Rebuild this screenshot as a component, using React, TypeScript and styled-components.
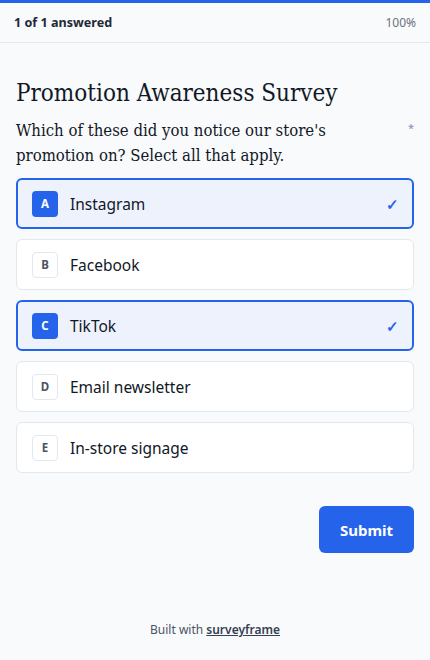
import React from "react";
import styled, { createGlobalStyle } from "styled-components";

const Global = createGlobalStyle`
  html, body { margin: 0; padding: 0; background: #f9fafb; }
  body { font-family: "Noto Sans", "Open Sans", sans-serif; color: #111827; }
  * { box-sizing: border-box; }
`;

const Page = styled.div`
  min-height: 660px;
  display: flex;
  flex-direction: column;
  background: #f9fafb;
`;

const TopBar = styled.div`
  height: 3px;
  background: #2563eb;
`;

const Header = styled.div`
  height: 40px;
  display: flex;
  align-items: center;
  justify-content: space-between;
  padding: 0 14px;
  border-bottom: 1px solid #e5e7eb;
`;

const Answered = styled.span`
  font-size: 12.6px;
  font-weight: 700;
  color: #1f2937;
`;

const Percent = styled.span`
  font-size: 12px;
  color: #6b7280;
`;

const Main = styled.main`
  padding: 34px 16px 0;
  display: flex;
  flex-direction: column;
`;

const serif = `"DejaVu Serif Condensed", "DejaVu Serif", Georgia, serif`;

const Title = styled.h1`
  margin: 0;
  font-family: ${serif};
  font-stretch: condensed;
  font-weight: 400;
  font-size: 24px;
  line-height: 32px;
  color: #111827;
`;

const QuestionRow = styled.div`
  display: flex;
  justify-content: space-between;
  align-items: flex-start;
  margin-top: 9px;
`;

const Question = styled.p`
  margin: 0;
  font-family: ${serif};
  font-stretch: condensed;
  font-size: 16.6px;
  line-height: 25px;
  color: #111827;
  max-width: 340px;
`;

const Required = styled.span`
  font-size: 11px;
  color: #7c8cc4;
  margin-top: 2px;
  margin-right: 0;
`;

const Options = styled.div`
  display: flex;
  flex-direction: column;
  gap: 10px;
  margin-top: 10px;
`;

const Option = styled.div<{ $selected?: boolean }>`
  height: 51px;
  display: flex;
  align-items: center;
  border-radius: 6px;
  border: ${(p) => (p.$selected ? "2px solid #2563eb" : "1px solid #e2e8f0")};
  padding: 0 ${(p) => (p.$selected ? "15px 0 14px" : "16px 0 15px")};
  background: ${(p) => (p.$selected ? "#eef2fd" : "#ffffff")};
`;

const Badge = styled.span<{ $selected?: boolean }>`
  width: 26px;
  height: 26px;
  border-radius: 4px;
  display: flex;
  align-items: center;
  justify-content: center;
  font-size: 11.5px;
  font-weight: 700;
  color: ${(p) => (p.$selected ? "#ffffff" : "#4b5563")};
  background: ${(p) => (p.$selected ? "#2563eb" : "#ffffff")};
  border: ${(p) => (p.$selected ? "none" : "1px solid #e2e8f0")};
`;

const Label = styled.span`
  margin-left: 12px;
  font-size: 15.5px;
  color: #111827;
  flex: 1;
`;

const Check = styled.span`
  color: #2563eb;
  font-size: 15px;
  font-weight: 700;
  margin-right: -2px;
`;

const Actions = styled.div`
  display: flex;
  justify-content: flex-end;
  margin-top: 33px;
`;

const Submit = styled.button`
  width: 95px;
  height: 47px;
  border: none;
  border-radius: 6px;
  background: #2563eb;
  color: #ffffff;
  font-family: "Noto Sans", sans-serif;
  font-size: 15px;
  font-weight: 700;
`;

const Footer = styled.footer`
  margin-top: 68px;
  text-align: center;
  font-size: 12px;
  color: #4b5563;
`;

const Brand = styled.a`
  color: #374151;
  font-weight: 600;
  text-decoration: underline;
`;

const options = [
  { key: "A", label: "Instagram", selected: true },
  { key: "B", label: "Facebook", selected: false },
  { key: "C", label: "TikTok", selected: true },
  { key: "D", label: "Email newsletter", selected: false },
  { key: "E", label: "In-store signage", selected: false },
];

export default function App() {
  return (
    <Page>
      <Global />
      <TopBar />
      <Header>
        <Answered>1 of 1 answered</Answered>
        <Percent>100%</Percent>
      </Header>
      <Main>
        <Title>Promotion Awareness Survey</Title>
        <QuestionRow>
          <Question>
            Which of these did you notice our store's promotion on? Select all that apply.
          </Question>
          <Required>*</Required>
        </QuestionRow>
        <Options>
          {options.map((o) => (
            <Option key={o.key} $selected={o.selected}>
              <Badge $selected={o.selected}>{o.key}</Badge>
              <Label>{o.label}</Label>
              {o.selected && <Check>✓</Check>}
            </Option>
          ))}
        </Options>
        <Actions>
          <Submit>Submit</Submit>
        </Actions>
        <Footer>
          Built with <Brand>surveyframe</Brand>
        </Footer>
      </Main>
    </Page>
  );
}
